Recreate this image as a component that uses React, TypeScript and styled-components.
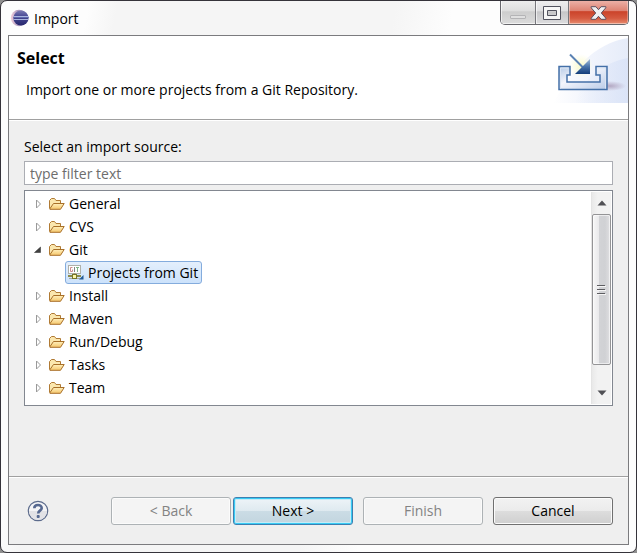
import React, { useState } from "react";
import styled, { createGlobalStyle, css } from "styled-components";

const GlobalStyle = createGlobalStyle`
  * { box-sizing: border-box; }
  body { margin: 0; background: #8f8f8f; }
  body, button, input { font-family: "Open Sans", "Noto Sans", sans-serif; font-size: 14px; color: #000; }
`;

const Window = styled.main`
  display: flex;
  flex-direction: column;
  min-height: 100vh;
  padding: 0 7px 7px;
  border: 1px solid #35333a;
  border-radius: 7px;
  background: linear-gradient(100deg, #fdfdfd 0 12%, #f5f5f5 16% 54%, #fdfdfd 62%);
`;

const TitleBar = styled.header`
  display: flex;
  align-items: flex-start;
  justify-content: space-between;
  height: 34px;
`;

const Title = styled.div`
  display: flex;
  align-items: center;
  gap: 5px;
  height: 34px;
  padding-left: 2px;
`;

const WindowControls = styled.div`
  display: flex;
  border: 1px solid #67676c;
  border-top: 0;
  border-radius: 0 0 5px 5px;
  overflow: hidden;
`;

const ControlButton = styled.button<{ $kind?: "close" | "dim" }>`
  display: flex;
  align-items: center;
  justify-content: center;
  width: ${(p) => (p.$kind === "close" ? 59 : p.$kind === "dim" ? 35 : 33)}px;
  height: 23px;
  padding: 0;
  border: 0;
  border-right: 1px solid #77777c;
  background: linear-gradient(#eeeeef 0, #dedee0 45%, #c6c6c8 46%, #dcdcde 100%);
  box-shadow: inset 1px -1px 0 #ffffffa0;
  ${(p) =>
    p.$kind === "dim" &&
    css`
      padding-top: 9px;
      background: linear-gradient(#ededed, #dddddd 45%, #cdcdcd 46%, #dcdcdc);
    `}
  ${(p) =>
    p.$kind === "close" &&
    css`
      border-right: 0;
      background: linear-gradient(#ecb0a6 0, #dd8171 44%, #cb432a 46%, #d55a40 75%, #e88d70 100%);
      box-shadow: inset 1px -1px 0 #ffffff70, inset -1px 0 0 #ffffff50;
    `}
`;

const Client = styled.div`
  flex: 1;
  display: flex;
  flex-direction: column;
  border: 1px solid #7b7b7e;
  background: #efefef;
`;

const Banner = styled.section`
  display: flex;
  justify-content: space-between;
  height: 84px;
  padding: 1px 0 0 8px;
  background: #fff;
  border-bottom: 1px solid #a0a0a0;
`;

const BannerTitle = styled.h1`
  margin: 10px 0 0;
  font-size: 16px;
  line-height: 22px;
  font-weight: 700;
`;

const BannerText = styled.p`
  margin: 11px 0 0 9px;
  line-height: 20px;
`;

const Body = styled.section`
  flex: 1;
  display: flex;
  flex-direction: column;
  padding: 16px 15px;
  border-top: 1px solid #fff;
`;

const Label = styled.label`
  line-height: 20px;
`;

const FilterInput = styled.input`
  height: 24px;
  margin: 4px 0 5px;
  padding: 0 5px;
  border: 1px solid #abadb3;
  background: #fff;
  &::placeholder { color: #6d6d6d; opacity: 1; }
`;

const TreeBox = styled.div`
  display: flex;
  justify-content: space-between;
  padding: 1px;
  border: 1px solid #828790;
  background: #fff;
`;

const Tree = styled.ul`
  margin: 0;
  padding: 0 0 5px 8px;
  list-style: none;
`;

const Branch = styled.ul`
  margin: 0;
  padding: 0 0 0 31px;
  list-style: none;
`;

const Row = styled.div`
  display: flex;
  align-items: center;
  height: 23px;
`;

const Expander = styled.button`
  display: flex;
  align-items: center;
  width: 15px;
  height: 16px;
  padding: 0;
  border: 0;
  background: none;
`;

const RowLabel = styled.span`
  padding-left: 4px;
`;

const LeafRow = styled(Row)<{ $selected?: boolean }>`
  width: max-content;
  padding: 0 3px 0 2px;
  border: 1px solid ${(p) => (p.$selected ? "#84acdd" : "transparent")};
  border-radius: 3px;
  background: ${(p) => (p.$selected ? "linear-gradient(#e4effc, #cce2fb)" : "none")};
`;

const Scrollbar = styled.div`
  display: flex;
  flex-direction: column;
  width: 20px;
  border-left: 1px solid #e4e4e4;
  background: linear-gradient(90deg, #e9e9e9, #f2f2f2 30%, #f2f2f2);
`;

const ScrollButton = styled.button`
  display: flex;
  align-items: center;
  justify-content: center;
  height: 22px;
  padding: 0;
  border: 0;
  background: none;
`;

const Track = styled.div`
  flex: 1;
`;

const Thumb = styled.div`
  display: flex;
  align-items: center;
  justify-content: center;
  height: 90%;
  border: 1px solid #949496;
  border-radius: 2px;
  background: linear-gradient(90deg, #f7f7f7 0, #e9e9eb 36%, #d2d3d6 38%, #d0d1d4 70%, #dfdfe1 100%);
  box-shadow: inset 0 0 0 1px #ffffff90;
`;

const Footer = styled.footer`
  display: flex;
  align-items: center;
  height: 68px;
  padding: 0 15px 0 18px;
  border-top: 1px solid #a0a0a0;
  box-shadow: inset 0 1px 0 #fff;
`;

const HelpButton = styled.button`
  display: flex;
  padding: 0;
  border: 0;
  background: none;
`;

const Actions = styled.div`
  display: flex;
  gap: 10px;
  margin-left: auto;
`;

const ButtonPair = styled.div`
  display: flex;
  gap: 2px;
`;

const PushButton = styled.button<{ $primary?: boolean }>`
  width: 120px;
  height: 28px;
  padding: 0;
  border: 1px solid ${(p) => (p.$primary ? "#3c7fb1" : "#707070")};
  border-radius: 3px;
  background: ${(p) =>
    p.$primary
      ? "linear-gradient(#eef4f8 0, #dfeaf0 48%, #cbdce5 50%, #c2d5df 100%)"
      : "linear-gradient(#f2f2f2 0, #ebebeb 48%, #dddddd 50%, #cfcfcf 100%)"};
  box-shadow: ${(p) => (p.$primary ? "inset 0 0 0 1px #38cbf4, inset 0 0 0 2px #c5ebf7" : "inset 0 0 0 1px #fbfbfb")};
  &:disabled {
    border-color: #adb2b5;
    background: #f4f4f4;
    color: #838383;
  }
`;

const EclipseIcon = () => (
  <svg width="19" height="18" viewBox="0 0 19 18" aria-hidden="true">
    <defs>
      <linearGradient id="moon" x1="0" x2="1">
        <stop offset="0" stopColor="#f0c3d3" />
        <stop offset=".4" stopColor="#9c83ae" />
        <stop offset="1" stopColor="#8a7fb5" />
      </linearGradient>
      <linearGradient id="planet" x1="0" x2="0" y1="0" y2="1">
        <stop offset="0" stopColor="#7c7cb4" />
        <stop offset=".35" stopColor="#4d4d98" />
        <stop offset="1" stopColor="#25256c" />
      </linearGradient>
    </defs>
    <circle cx="9" cy="9" r="8.200" fill="url(#moon)" opacity=".8" />
    <circle cx="11" cy="9" r="7.600" fill="url(#planet)" />
    <path d="M3.500 7.500h15M3.500 10.500h15" stroke="#a9b4df" />
    <path d="M3.500 8.500h15.200" stroke="#5b66ad" />
  </svg>
);

const MinimizeIcon = () => (
  <svg width="18" height="6" viewBox="0 0 18 6" aria-hidden="true">
    <rect x="1.500" y="1.500" width="15" height="3" rx=".5" fill="#e0e0e0" stroke="#b4b4b6" />
  </svg>
);

const MaximizeIcon = () => (
  <svg width="18" height="14" viewBox="0 0 18 14" aria-hidden="true">
    <path
      d="M.500.500h17v13H.500zM4.500 4.500v5h9v-5z"
      fill="#f6f6f6"
      stroke="#51525e"
      strokeLinejoin="round"
      fillRule="evenodd"
    />
  </svg>
);

const CloseIcon = () => (
  <svg width="17" height="14" viewBox="0 0 17 14" aria-hidden="true">
    <path
      d="M1.200.700h4.700L8.500 3.700l2.600-3h4.700v1.100L11.300 7l4.500 5.200v1.100h-4.700l-2.600-3-2.600 3H1.200v-1.100L5.700 7 1.200 1.800z"
      fill="#f0f0f2"
      stroke="#5b4f5e"
      strokeLinejoin="round"
    />
  </svg>
);

const ImportIcon = () => (
  <svg width="75" height="66" viewBox="0 0 75 66" aria-hidden="true">
    <defs>
      <linearGradient id="swoosh" x1="0" x2="1">
        <stop offset="0" stopColor="#fff" />
        <stop offset=".5" stopColor="#f1f4fc" />
        <stop offset="1" stopColor="#e6ecf9" />
      </linearGradient>
      <linearGradient id="swooshInner" x1="0" x2="1">
        <stop offset="0" stopColor="#dce5f8" stopOpacity="0" />
        <stop offset="1" stopColor="#d8e2f7" stopOpacity=".8" />
      </linearGradient>
      <linearGradient id="tray" x1="0" y1="0" x2="1" y2="1">
        <stop offset="0" stopColor="#b4c9e5" />
        <stop offset=".4" stopColor="#f3f5fc" />
        <stop offset="1" stopColor="#b9cbe8" />
      </linearGradient>
      <linearGradient id="head" x1="0" y1="0" x2="0" y2="1">
        <stop offset="0" stopColor="#a3bddb" />
        <stop offset=".5" stopColor="#4a75ab" />
        <stop offset="1" stopColor="#123c7a" />
      </linearGradient>
      <radialGradient id="shade">
        <stop offset="0" stopColor="#b3a8c3" />
        <stop offset="1" stopColor="#b3a8c3" stopOpacity="0" />
      </radialGradient>
      <radialGradient id="glow">
        <stop offset="0" stopColor="#fbfbc8" />
        <stop offset="1" stopColor="#fbfbd5" stopOpacity="0" />
      </radialGradient>
    </defs>
    <path d="M0 66C20 32 40 7 75 1v65z" fill="url(#swoosh)" />
    <path d="M22 66C30 40 50 26 75 21v45z" fill="url(#swooshInner)" />
    <ellipse cx="57" cy="49" rx="16" ry="5" fill="url(#shade)" />
    <circle cx="28" cy="29" r="12" fill="url(#glow)" />
    <path
      d="M6 29.500h11V38h-3v7h33v-7h-4v-8.500h11v23H6z"
      fill="url(#tray)"
      stroke="#4470a8"
      strokeWidth="1.500"
    />
    <path d="M7.500 51.500V31h8M44.500 31h8v20.500" fill="none" stroke="#dbe5f3" />
    <path d="M17 17.500 30 30.500" stroke="#5b82b3" strokeWidth="2" />
    <path d="M37 22v15H22z" fill="url(#head)" />
  </svg>
);

const FolderIcon = () => (
  <svg width="16" height="14" viewBox="0 0 16 14" aria-hidden="true">
    <defs>
      <linearGradient id="folder" x1="0" y1="0" x2="0" y2="1">
        <stop offset="0" stopColor="#fff0bd" />
        <stop offset="1" stopColor="#f5c66b" />
      </linearGradient>
    </defs>
    <path d="M.500 11.500v-8l2-2h3l1.500 2h4.500v3" fill="#fbe7ae" stroke="#b07a34" strokeLinejoin="round" />
    <path d="M.700 12 4.500 6.500h10.700L11.500 12.300H.900z" fill="url(#folder)" stroke="#a86f28" strokeLinejoin="round" />
  </svg>
);

const GitIcon = () => (
  <svg width="16" height="16" viewBox="0 0 16 16" aria-hidden="true">
    <rect x=".5" y=".5" width="12" height="8" fill="#fff" stroke="#b0b0a8" />
    <path d="M4.500 2.500h-2v4h2V4.500" fill="none" stroke="#d08c8c" />
    <path d="M6.500 2v5" fill="none" stroke="#858585" />
    <path d="M8 2.500h3M9.500 2v5" fill="none" stroke="#7db585" />
    <path d="M6.500 8.500v2M0 11h13" stroke="#8c8c4c" strokeWidth="2" />
    <path d="M1 13.500h11" stroke="#a9a9a0" />
    <rect x="4.500" y="9.500" width="4" height="4" fill="#fff9a8" stroke="#77772b" />
    <path d="M15.500 10v4.500H11z" fill="#215a96" />
  </svg>
);

const ArrowIcon = ({ open }: { open?: boolean }) => (
  <svg width="8" height="10" viewBox="0 0 8 10" aria-hidden="true">
    {open ? (
      <path d="M6.500 2v5.500H.500z" fill="#404040" stroke="#262626" strokeWidth=".5" />
    ) : (
      <path d="M2.500 1v8l4-4z" fill="#fff" stroke="#9a9a9a" />
    )}
  </svg>
);

const ScrollArrow = ({ down }: { down?: boolean }) => (
  <svg width="10" height="6" viewBox="0 0 10 6" aria-hidden="true">
    <path d={down ? "M.500.500h9L5 5.500z" : "M.500 5.500h9L5 .500z"} fill="#505055" />
  </svg>
);

const GripIcon = () => (
  <svg width="9" height="12" viewBox="0 0 9 12" aria-hidden="true">
    <path d="M0 1.500h8M0 5.500h8M0 9.500h8" stroke="#5d5d61" />
    <path d="M0 2.500h9M0 6.500h9M0 10.500h9" stroke="#f5f5f5" />
  </svg>
);

const HelpIcon = () => (
  <svg width="22" height="22" viewBox="0 0 22 22" aria-hidden="true">
    <circle cx="11" cy="11" r="9.700" fill="#f4f4f6" stroke="#5c6b8c" strokeWidth="1.200" />
    <path d="M2 11a9 9 0 0 0 18 0z" fill="#e2e2e6" />
    <path d="M7.300 8.300C7.300 3.900 14.700 4 14.700 8c0 2.600-3.500 2.700-3.500 5.400" fill="none" stroke="#566890" strokeWidth="2.600" />
    <rect x="9.700" y="15" width="3" height="3" rx="1" fill="#566890" />
  </svg>
);

const sources: { name: string; children?: string[] }[] = [
  { name: "General" },
  { name: "CVS" },
  { name: "Git", children: ["Projects from Git"] },
  { name: "Install" },
  { name: "Maven" },
  { name: "Run/Debug" },
  { name: "Tasks" },
  { name: "Team" },
];

export default function App() {
  const [filter, setFilter] = useState("");
  return (
    <>
      <GlobalStyle />
      <Window>
        <TitleBar>
          <Title>
            <EclipseIcon />
            Import
          </Title>
          <WindowControls>
            <ControlButton $kind="dim" aria-label="Minimize"><MinimizeIcon /></ControlButton>
            <ControlButton aria-label="Maximize"><MaximizeIcon /></ControlButton>
            <ControlButton $kind="close" aria-label="Close"><CloseIcon /></ControlButton>
          </WindowControls>
        </TitleBar>
        <Client>
          <Banner>
            <div>
              <BannerTitle>Select</BannerTitle>
              <BannerText>Import one or more projects from a Git Repository.</BannerText>
            </div>
            <ImportIcon />
          </Banner>
          <Body>
            <Label htmlFor="filter">Select an import source:</Label>
            <FilterInput
              id="filter"
              type="text"
              placeholder="type filter text"
              value={filter}
              onChange={(e) => setFilter(e.target.value)}
            />
            <TreeBox>
              <Tree role="tree">
                {sources.map(({ name, children }) => (
                  <li key={name} role="treeitem" aria-expanded={!!children}>
                    <Row>
                      <Expander aria-label={`Toggle ${name}`}><ArrowIcon open={!!children} /></Expander>
                      <FolderIcon />
                      <RowLabel>{name}</RowLabel>
                    </Row>
                    {children && (
                      <Branch role="group">
                        {children.map((child) => (
                          <li key={child} role="treeitem" aria-selected="true">
                            <LeafRow $selected>
                              <GitIcon />
                              <RowLabel>{child}</RowLabel>
                            </LeafRow>
                          </li>
                        ))}
                      </Branch>
                    )}
                  </li>
                ))}
              </Tree>
              <Scrollbar>
                <ScrollButton aria-label="Scroll up"><ScrollArrow /></ScrollButton>
                <Track>
                  <Thumb><GripIcon /></Thumb>
                </Track>
                <ScrollButton aria-label="Scroll down"><ScrollArrow down /></ScrollButton>
              </Scrollbar>
            </TreeBox>
          </Body>
          <Footer>
            <HelpButton aria-label="Help"><HelpIcon /></HelpButton>
            <Actions>
              <ButtonPair>
                <PushButton disabled>&lt; Back</PushButton>
                <PushButton $primary>Next &gt;</PushButton>
              </ButtonPair>
              <PushButton disabled>Finish</PushButton>
              <PushButton>Cancel</PushButton>
            </Actions>
          </Footer>
        </Client>
      </Window>
    </>
  );
}
